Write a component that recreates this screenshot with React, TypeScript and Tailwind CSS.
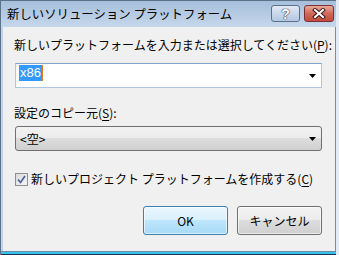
import React from "react";

function Arrow() {
  return (
    <svg width="7" height="4" viewBox="0 0 7 4" className="shrink-0">
      <path d="M0 0H7L3.5 4Z" fill="#000" />
    </svg>
  );
}

function Mn({ k }: { k: string }) {
  return (
    <>
      (<span className="underline underline-offset-2">{k}</span>)
    </>
  );
}

export default function App() {
  return (
    <div className="w-[339px] h-[255px] overflow-hidden bg-[#e3ecf6] font-['Noto_Sans_CJK_JP','Noto_Sans',sans-serif] text-[12px] leading-4 text-black">
      <div className="w-[336px] h-[255px] flex flex-col border-l border-t border-[#5d7189]">
        {/* Title bar */}
        <div className="h-[26px] flex items-start bg-gradient-to-b from-[#a6bfdb] to-[#c5d7eb]">
          <span className="pl-[6px] pt-[5px] whitespace-nowrap text-[12.4px]">新しいソリューション プラットフォーム</span>
          <div className="ml-auto mr-[2px] mt-[4px] flex gap-[4px]">
            <div className="w-[29px] h-[17px] rounded-[3px] border border-[#58708e] bg-gradient-to-b from-[#e2eaf5] via-[#c9d7ea] to-[#b4c8e0] flex items-center justify-center">
              <span className="text-white font-bold text-[14px] leading-none font-['Liberation_Sans',sans-serif] [text-shadow:0_0_1px_#2a3a50,0_0_1px_#2a3a50,0_0_1px_#2a3a50]">?</span>
            </div>
            <div className="w-[30px] h-[17px] rounded-[3px] border border-[#7a3030] bg-gradient-to-b from-[#e9a99a] via-[#d0685a] to-[#c24b3d] flex items-center justify-center">
              <svg width="14" height="11" viewBox="0 0 14 11">
                <path d="M3 2L11 9M11 2L3 9" stroke="#3b1a1a" strokeWidth="4" strokeLinecap="square" />
                <path d="M3 2L11 9M11 2L3 9" stroke="#fff" strokeWidth="2" strokeLinecap="square" />
              </svg>
            </div>
          </div>
        </div>

        {/* Body */}
        <div className="flex h-[224px]">
          <div className="w-[2px] bg-[#c2d4e9]" />
          <div className="w-[332px] bg-[#f0f0f0] pl-[12px] pr-[13px] pt-[10px] flex flex-col">
            <div className="-ml-[1px] whitespace-nowrap h-4">
              新しいプラットフォームを入力または選択してください<Mn k="P" />:
            </div>

            <div className="mt-[10px] h-[25px] border border-[#a9c6e3] border-t-[#7fa5cc] bg-white flex items-start pl-[3px] pr-[5px]">
              <div className="mt-[1px] h-[16px] flex items-center">
                <span className="bg-[#3399ff] text-white h-[16px] leading-4 px-[1px] font-['Liberation_Sans',sans-serif] text-[13px]">x86</span>
                <span className="w-[1px] h-[16px] bg-[#e07a1f]" />
              </div>
              <div className="ml-auto self-center">
                <Arrow />
              </div>
            </div>

            <div className="mt-[17px] -ml-[1px] h-4">
              設定のコピー元<Mn k="S" />:
            </div>

            <div className="mt-[5px] h-[25px] rounded-[3px] border border-[#707070] bg-[linear-gradient(#f2f2f2_0%,#ebebeb_50%,#dddddd_50%,#cfcfcf_100%)] flex items-center pl-[4px] pr-[5px]">
              <span>&lt;空&gt;</span>
              <div className="ml-auto">
                <Arrow />
              </div>
            </div>

            <div className="mt-[20px] h-4 flex items-center gap-[3px]">
              <div className="w-[13px] h-[13px] border border-[#8e8f8f] bg-gradient-to-br from-[#d9dadb] to-[#f5f5f5] flex items-center justify-center">
                <svg width="9" height="9" viewBox="0 0 9 9">
                  <path d="M1 4.5L3.5 7.5L8 1" stroke="#4a5f97" strokeWidth="1.6" fill="none" />
                </svg>
              </div>
              <span className="whitespace-nowrap">
                新しいプロジェクト プラットフォームを作成する<Mn k="C" />
              </span>
            </div>

            <div className="mt-[19px] flex justify-end gap-[9px]">
              <button className="w-[85px] h-[29px] rounded-[3px] border border-[#3c7fb1] bg-[linear-gradient(#eaf6fd_0%,#d9f0fc_50%,#bee6fd_50%,#a7d9f5_100%)] shadow-[inset_0_0_0_1px_rgba(255,255,255,0.6)]">
                OK
              </button>
              <button className="w-[85px] h-[29px] rounded-[3px] border border-[#707070] bg-[linear-gradient(#f2f2f2_0%,#ebebeb_50%,#dddddd_50%,#cfcfcf_100%)] shadow-[inset_0_0_0_1px_rgba(255,255,255,0.6)]">
                キャンセル
              </button>
            </div>
          </div>
          <div className="w-[1px] bg-[#3f9fd8]" />
        </div>

        {/* Bottom frame */}
        <div className="h-[1px] bg-[#6f8aa7]" />
        <div className="h-[2px] bg-[#35c2ee]" />
        <div className="h-[1px] bg-[#1f3247]" />
      </div>
    </div>
  );
}
